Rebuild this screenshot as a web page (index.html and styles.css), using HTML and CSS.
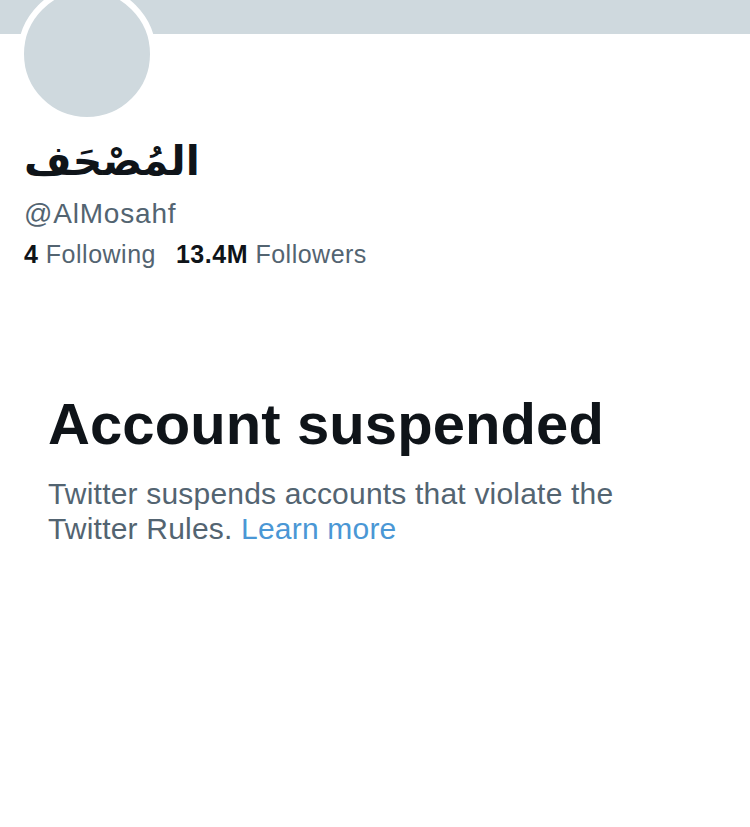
FILE: index.html
```html
<!DOCTYPE html>
<html lang="en">
<head>
<meta charset="utf-8">
<link rel="stylesheet" href="styles.css">
</head>
<body>
<div class="banner"></div>
<div class="profile">
  <div class="avatar"></div>
  <div class="name" dir="rtl" lang="ar">المُصْحَف</div>
  <div class="handle">@AlMosahf</div>
  <div class="stats">
    <span class="stat"><b>4</b> Following</span>
    <span class="stat"><b>13.4M</b> Followers</span>
  </div>
</div>
<div class="suspended">
  <h1 class="title">Account suspended</h1>
  <p class="desc">Twitter suspends accounts that violate the Twitter Rules. <a class="link" href="#">Learn more</a></p>
</div>
</body>
</html>
```
FILE: styles.css
```css
html, body {
  margin: 0;
  padding: 0;
  background: #ffffff;
  font-family: "Liberation Sans", Arial, sans-serif;
  color: #0f1419;
}
.banner {
  height: 34px;
  background: #cfd9de;
}
.profile {
  padding: 0 24px;
  display: flex;
  flex-direction: column;
  align-items: flex-start;
}
.avatar {
  width: 126px;
  height: 126px;
  border-radius: 50%;
  background: #cfd9de;
  border: 6px solid #ffffff;
  margin: -49px 0 0 -6px;
}
.name {
  font-family: "DejaVu Sans", "Noto Sans", sans-serif;
  font-weight: bold;
  font-size: 41px;
  line-height: 44px;
  margin-top: 16px;
}
.handle {
  font-size: 28px;
  line-height: 34px;
  letter-spacing: 0.8px;
  color: #536471;
  margin-top: 14px;
}
.stats {
  display: flex;
  gap: 20px;
  font-size: 25px;
  line-height: 30px;
  letter-spacing: 0.5px;
  color: #536471;
  margin-top: 8px;
}
.stat b {
  color: #0f1419;
}
.suspended {
  padding: 0 48px;
  margin-top: 123px;
}
.title {
  margin: 0;
  font-size: 58px;
  line-height: 64px;
  font-weight: bold;
  letter-spacing: 0.1px;
}
.desc {
  margin: 20px 0 0;
  font-size: 30px;
  line-height: 35px;
  letter-spacing: 0.2px;
  color: #536471;
  max-width: 600px;
}
.link {
  color: #4a97d5;
  text-decoration: none;
}
```
